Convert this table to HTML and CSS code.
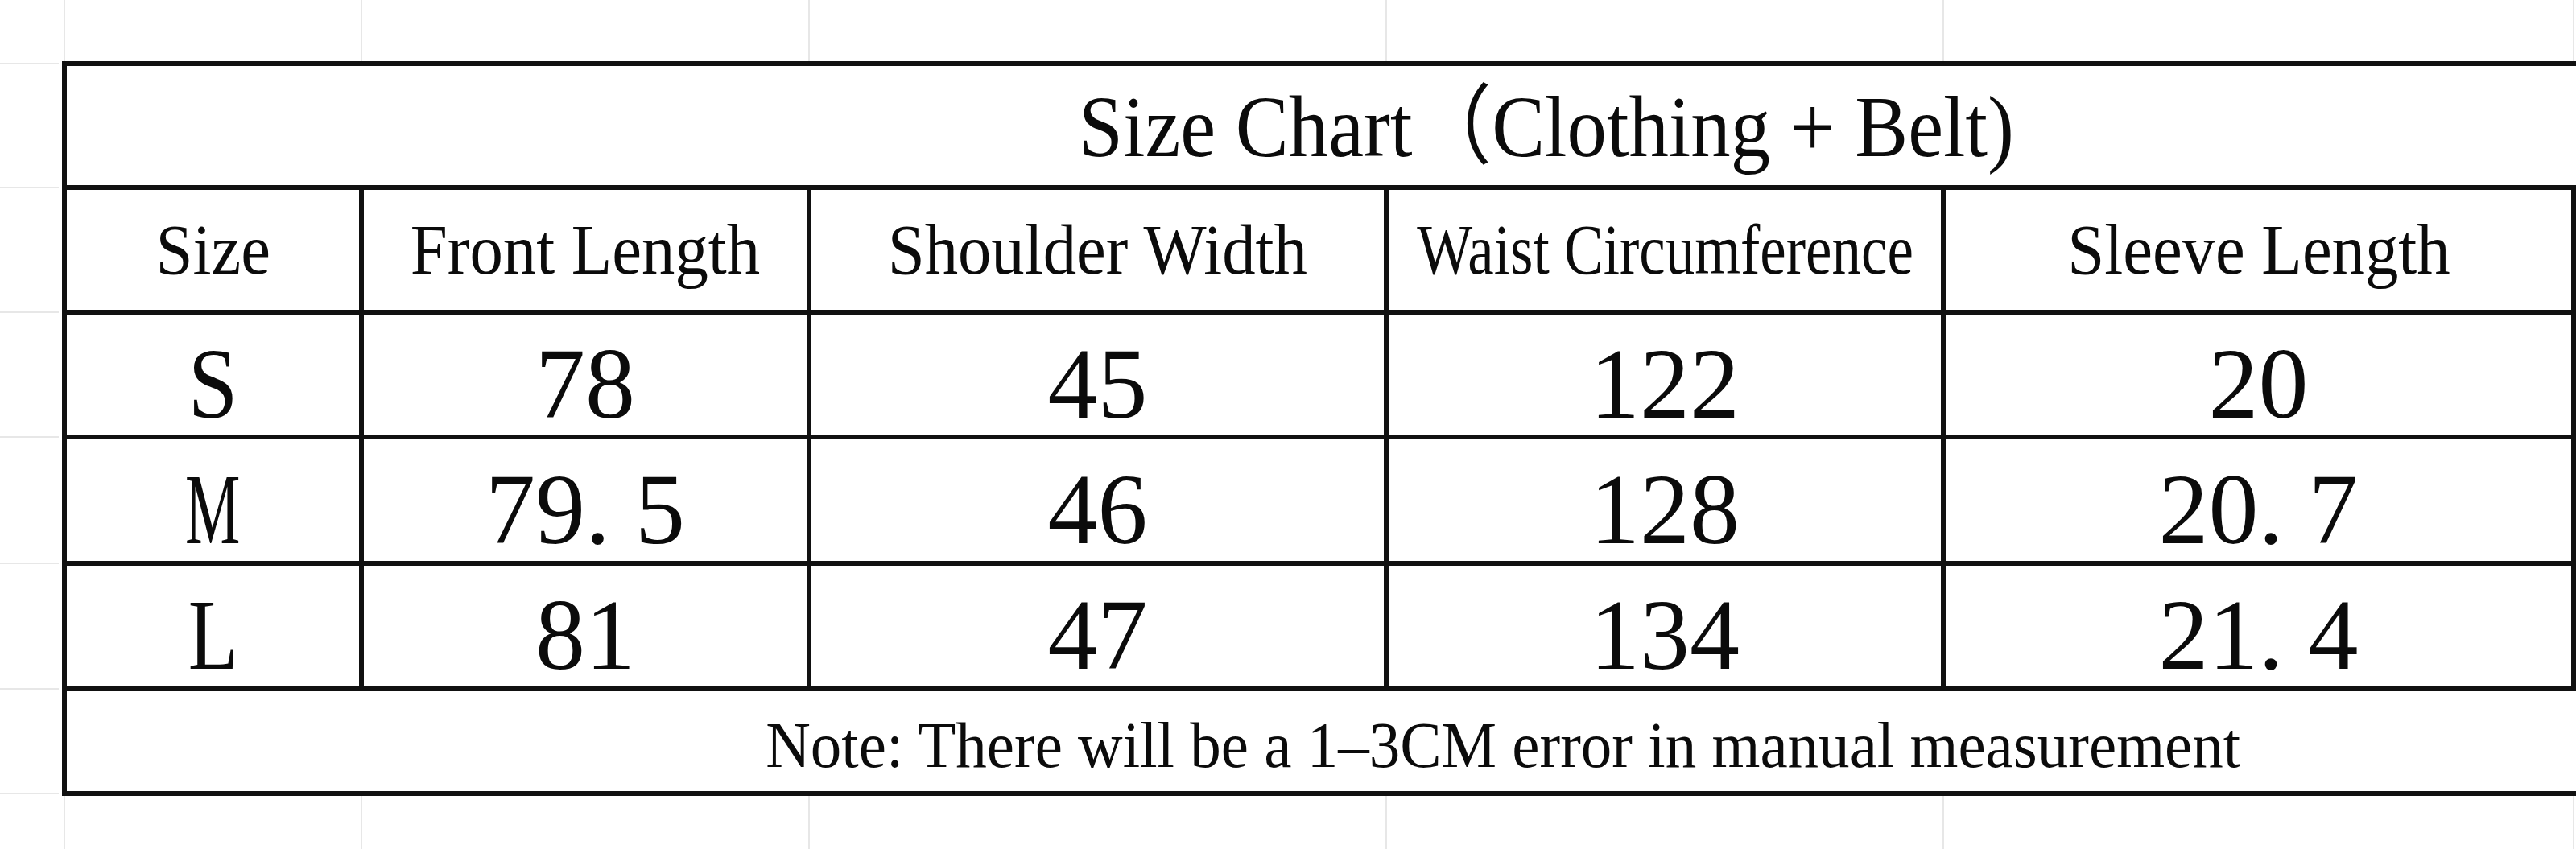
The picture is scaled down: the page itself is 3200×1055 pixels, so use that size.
FILE: index.html
```html
<!DOCTYPE html>
<html lang="en">
<head>
<meta charset="utf-8">
<title>Size Chart</title>
<link rel="stylesheet" href="styles.css">
</head>
<body>
<main class="sheet">
  <div class="corner"></div>
  <div class="col-guides"><span></span><span></span><span></span><span></span><span></span><span></span></div>
  <div class="row-guides"><span></span><span></span><span></span><span></span><span></span><span></span><span></span></div>
  <section class="chart">
    <div class="title-cell"><span class="title">Size Chart（Clothing + Belt)</span></div>

    <div class="cell head"><span class="label">Size</span></div>
    <div class="cell head"><span class="label">Front Length</span></div>
    <div class="cell head"><span class="label">Shoulder Width</span></div>
    <div class="cell head"><span class="label label-tight">Waist Circumference</span></div>
    <div class="cell head"><span class="label">Sleeve Length</span></div>

    <div class="cell data"><span class="size-label">S</span></div>
    <div class="cell data"><span class="num">78</span></div>
    <div class="cell data"><span class="num">45</span></div>
    <div class="cell data"><span class="num">122</span></div>
    <div class="cell data"><span class="num">20</span></div>

    <div class="cell data"><span class="size-label size-label-m">M</span></div>
    <div class="cell data"><span class="num">79. 5</span></div>
    <div class="cell data"><span class="num">46</span></div>
    <div class="cell data"><span class="num">128</span></div>
    <div class="cell data"><span class="num">20. 7</span></div>

    <div class="cell data"><span class="size-label size-label-l">L</span></div>
    <div class="cell data"><span class="num">81</span></div>
    <div class="cell data"><span class="num">47</span></div>
    <div class="cell data"><span class="num">134</span></div>
    <div class="cell data"><span class="num">21. 4</span></div>

    <div class="note-cell"><span class="note">Note: There will be a 1–3CM error in manual measurement</span></div>
  </section>
  <div class="corner"></div>
  <div class="col-guides"><span></span><span></span><span></span><span></span><span></span><span></span></div>
</main>
</body>
</html>
```

FILE: styles.css
```css
html, body {
  margin: 0;
  padding: 0;
  background: #ffffff;
  overflow: hidden;
}

body {
  font-family: "Liberation Serif", "Times New Roman", "Noto Sans CJK SC", serif;
  color: #0b0b0b;
}

*, *::before, *::after {
  box-sizing: border-box;
}

.sheet {
  display: grid;
  grid-template-columns: 77px 1fr;
  grid-template-rows: 76px auto 1fr;
  width: 3200px;
  height: 1055px;
}

/* faint spreadsheet gridlines around the chart */
.col-guides {
  display: grid;
  grid-template-columns: 6px 369px 556px 717px 692px 1fr;
}

.col-guides span {
  border-right: 2px solid #e7e7e7;
  margin-right: 2px;
}

.row-guides {
  display: grid;
  grid-template-rows: 6px 154px 155px 155px 157px 156px 130px;
}

.row-guides span {
  border-bottom: 2px solid #e7e7e7;
  margin-bottom: 2px;
  margin-right: 4px;
}

/* the chart */
.chart {
  display: grid;
  grid-template-columns: 369px 556px 717px 692px 1fr;
  grid-template-rows: 154px 155px 155px 157px 156px 130px;
  border-left: 6px solid #111;
  border-top: 6px solid #111;
}

.title-cell,
.note-cell {
  grid-column: 1 / -1;
  display: flex;
  align-items: center;
  justify-content: center;
  border-bottom: 6px solid #111;
}

.title-cell {
  padding-left: 559px;
  padding-top: 4px;
}

.note-cell {
  padding-left: 451px;
  padding-top: 10px;
}

.cell {
  display: flex;
  align-items: center;
  justify-content: center;
  border-right: 6px solid #111;
  border-bottom: 6px solid #111;
}

.data {
  padding-top: 24px;
}

.title,
.label,
.num,
.size-label,
.note {
  display: inline-block;
  line-height: 1;
  white-space: nowrap;
}

.title {
  font-size: 108px;
  transform: scaleX(0.915);
}

.label {
  font-size: 88px;
  transform: scaleX(0.94);
}

.label-tight {
  transform: scaleX(0.83);
}

.num {
  font-size: 124px;
}

.size-label {
  font-size: 124px;
  transform: scaleX(0.9);
}

.size-label-m {
  transform: scaleX(0.62);
}

.size-label-l {
  transform: scaleX(0.82);
}

.note {
  font-size: 80px;
  transform: scaleX(0.963);
}
```
